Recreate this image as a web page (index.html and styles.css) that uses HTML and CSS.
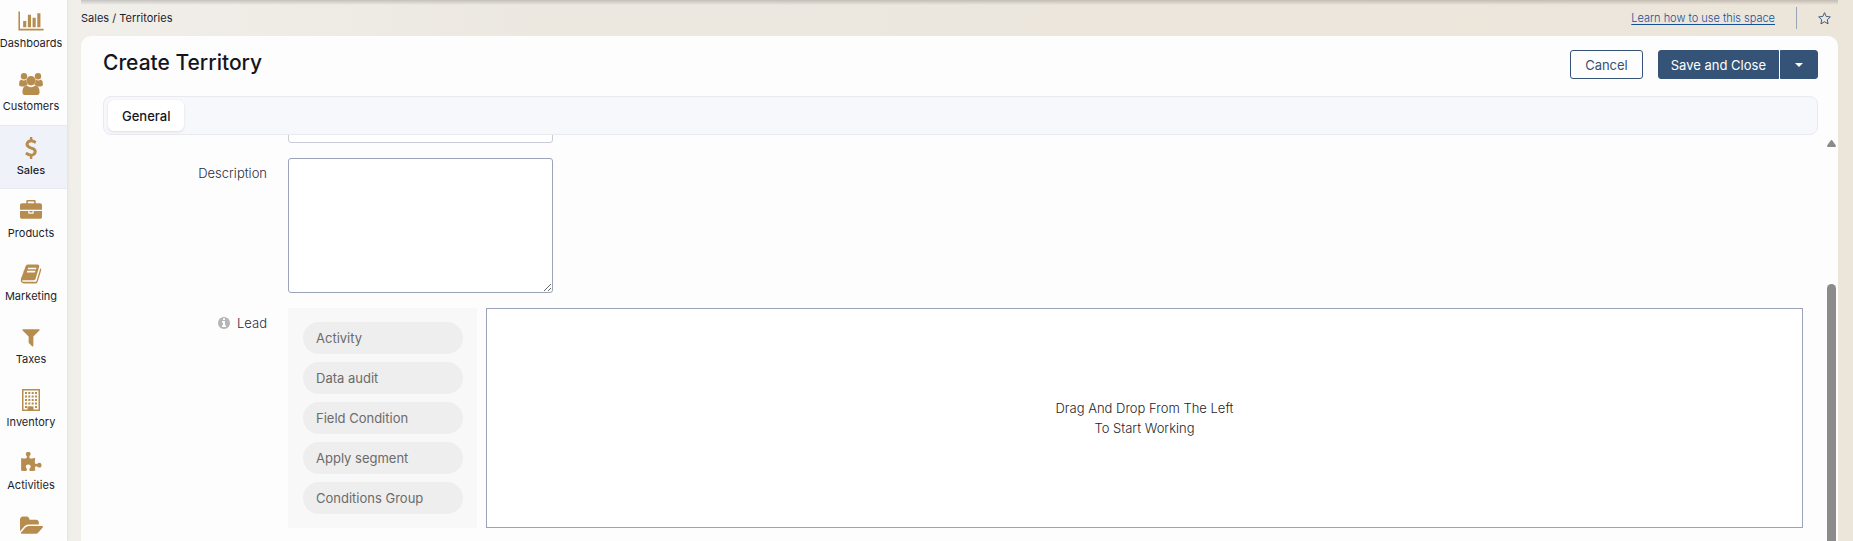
FILE: index.html
```html
<!DOCTYPE html>
<html lang="en">
<head>
<meta charset="utf-8">
<title>Create Territory</title>
<link rel="stylesheet" href="styles.css">
</head>
<body>
<div class="app">
  <nav class="sidebar" aria-label="Main">
    <a class="nav-item" href="#"><svg class="nav-icon" viewBox="0 0 2048 1792"><path d="M640 896v512h-256v-512h256zm384-512v1024h-256v-1024h256zm1024 1152v128h-2048v-1536h128v1408h1920zm-640-896v768h-256v-768h256zm384-384v1152h-256v-1152h256z"/></svg><span>Dashboards</span></a>
    <a class="nav-item" href="#"><svg class="nav-icon" viewBox="0 0 24 22"><circle cx="5" cy="3.3" r="3.2"/><circle cx="19" cy="3.3" r="3.2"/><path d="M2 6.6q3 2 5 0 .2 3.200 1.700 5.400Q6.500 12.200 5.500 13.600H2.400Q0 13.600 0 11.200 0 7.800 2 6.600zM22 6.600q-3 2-5 0-.2 3.200-1.700 5.400 2.200.2 3.200 1.600h3.100q2.400 0 2.400-2.400 0-3.400-2-4.600z"/><circle cx="12" cy="7.800" r="4.700"/><path d="M7.600 12.600q4.400 3.200 8.800 0 4.200.6 4.200 6.600 0 3-3 3H6.400q-3 0-3-3 0-6 4.200-6.600z"/></svg><span>Customers</span></a>
    <a class="nav-item active" href="#" aria-current="page"><svg class="nav-icon" viewBox="0 0 1792 1792"><path d="M1362 1185q0 153-99.500 263.500t-258.500 136.500v175q0 14-9 23t-23 9h-135q-13 0-22.500-9.500t-9.500-22.500v-175q-66-9-127.500-31t-101.500-44.500-74-48-46.500-37.500-17.500-18q-17-21-2-41l103-135q7-10 23-12 15-2 24 9l2 2q113 99 243 125 37 8 74 8 81 0 142.500-43t61.500-122q0-28-15-53t-33.500-42-58.500-37.500-66-32-80-32.500q-39-16-61.500-25t-61.500-26.500-62.500-31-56.500-35.500-53.500-42.500-43.500-49-35.500-58-21-66.500-8.500-78q0-138 98-242t255-134v-180q0-13 9.500-22.500t22.500-9.500h135q14 0 23 9t9 23v176q57 6 110.500 23t87 33.500 63.500 37.500 39 29 15 14q17 18 5 38l-81 146q-8 15-23 16-14 3-27-7-3-3-14.500-12t-39-26.500-58.500-32-74.500-26-85.500-11.500q-95 0-155 43t-60 111q0 26 8.500 48t29.500 41.500 39.500 33 56 31 60.500 27 70 27.500q53 20 81 31.500t76 35 75.500 42.500 62 50 53 63.500 31.500 76.500 13 94z"/></svg><span>Sales</span></a>
    <a class="nav-item" href="#"><svg class="nav-icon" viewBox="0 0 1792 1792"><path d="M640 256h512v-128h-512v128zm1152 640v480q0 66-47 113t-113 47h-1472q-66 0-113-47t-47-113v-480h672v160q0 26 19 45t45 19h320q26 0 45-19t19-45v-160h672zm-768 0v128h-256v-128h256zm768-480v384h-1792v-384q0-66 47-113t113-47h352v-160q0-40 28-68t68-28h576q40 0 68 28t28 68v160h352q66 0 113 47t47 113z"/></svg><span>Products</span></a>
    <a class="nav-item" href="#"><svg class="nav-icon" viewBox="0 0 1792 1792"><path d="M1703 478q40 57 18 129l-275 906q-19 64-76.500 107.500t-122.500 43.500h-923q-77 0-148.500-53.500t-99.500-131.500q-24-67-2-127 0-4 3-27t4-37q1-8-3-21.500t-3-19.500q2-11 8-21t16.500-23.500 16.500-23.500q23-38 45-91.500t30-91.500q3-10 .5-30t-.5-28q3-11 17-28t17-23q21-36 42-92t25-90q1-9-2.500-32t.5-28q4-13 22-30.500t22-22.500q19-26 42.500-84.500t27.500-96.500q1-8-3-25.500t-2-26.500q2-8 9-18t18-23 17-21q8-12 16.500-30.500t15-35 16-36 19.500-32 26.500-23.500 36-11.500 47.500 5.500l-1 3q38-9 51-9h761q74 0 114 56t18 130l-274 906q-36 119-71.500 153.500t-128.500 34.500h-869q-27 0-38 15-11 16-1 43 24 70 144 70h923q29 0 56-15.500t35-41.500l300-987q7-22 5-57 38 15 59 43zm-1064 2q-4 13 2 22.500t20 9.500h608q13 0 25.500-9.500t16.500-22.500l21-64q4-13-2-22.500t-20-9.500h-608q-13 0-25.500 9.500t-16.500 22.500zm-83 256q-4 13 2 22.500t20 9.500h608q13 0 25.500-9.500t16.500-22.500l21-64q4-13-2-22.500t-20-9.500h-608q-13 0-25.500 9.500t-16.500 22.500z"/></svg><span>Marketing</span></a>
    <a class="nav-item" href="#"><svg class="nav-icon" viewBox="0 0 1792 1792"><path d="M1595 295q17 41-14 70l-493 493v742q0 42-39 59-13 5-25 5-27 0-45-19l-256-256q-19-19-19-45v-486l-493-493q-31-29-14-70 17-39 59-39h1280q42 0 59 39z"/></svg><span>Taxes</span></a>
    <a class="nav-item" href="#"><svg class="nav-icon" viewBox="0 0 22 22"><path fill-rule="evenodd" d="M2 0h18v22H2zM3.500 1.500v19h4v-3h5v3h6v-19z"/><path d="M5 3h2v2H5zm3.300 0h2v2h-2zm3.400 0h2v2h-2zm3.300 0h2v2h-2zM5 6.500h2v2H5zm3.300 0h2v2h-2zm3.400 0h2v2h-2zm3.300 0h2v2h-2zM5 10h2v2H5zm3.300 0h2v2h-2zm3.400 0h2v2h-2zm3.300 0h2v2h-2zM5 13.500h2v2H5zm3.300 0h2v2h-2zm3.400 0h2v2h-2zm3.300 0h2v2h-2zM5 17h2v2H5zm10 0h2v2h-2zM8.500 17.500h5V21h-5z"/></svg><span>Inventory</span></a>
    <a class="nav-item" href="#"><svg class="nav-icon" viewBox="0 0 1792 1792"><path d="M1755 1083q0 81-44.500 135t-123.500 54q-41 0-77.500-17.500t-59-38-56.500-38-71-17.500q-110 0-110 124 0 39 16 115t15 115v5q-22 0-33 1-34 3-97.500 11.500t-115.500 13.500-98 5q-61 0-103-26.500t-42-83.500q0-37 17.500-71t38-56.500 38-59 17.500-77.500q0-79-54-123.500t-135-44.500q-84 0-143 45.500t-59 127.500q0 43 15 83t33.500 64.500 33.500 53 15 50.500q0 45-46 89-37 35-117 35-95 0-245-24-9-2-27.500-4t-27.500-4l-13-2q-1 0-3-1-2 0-2-1v-1024q2 1 17.500 3.500t34 5 21.500 3.500q150 24 245 24 80 0 117-35 46-44 46-89 0-22-15-50.500t-33.500-53-33.500-64.500-15-83q0-82 59-127.500t144-45.500q80 0 134 44.500t54 123.500q0 41-17.500 77.500t-38 59-38 56.500-17.500 71q0 57 42 83.500t103 26.500q64 0 180-15t163-17v2q-1 2-3.500 17.500t-5 34-3.500 21.500q-24 150-24 245 0 80 35 117 44 46 89 46 22 0 50.500-15t53-33.500 64.500-33.500 83-15q82 0 127.500 59t45.500 143z"/></svg><span>Activities</span></a>
    <a class="nav-item" href="#" aria-label="Documents"><svg class="nav-icon" viewBox="0 0 1920 1792"><path d="M1943 952q0 31-31 66l-336 396q-43 51-120.500 86.500t-143.500 35.500h-1088q-34 0-60.500-13t-26.500-43q0-31 31-66l336-396q43-51 120.500-86.500t143.500-35.500h1088q34 0 60.500 13t26.500 43zm-343-344v160h-832q-94 0-197 47.500t-164 119.500l-337 396-5 6q0-4-.5-12.500t-.5-12.500v-960q0-92 66-158t158-66h320q92 0 158 66t66 158v32h544q92 0 158 66t66 158z"/></svg></a>
  </nav>
  <div class="page">
    <header class="crumbs">
      <span>Sales / Territories</span>
      <div class="crumb-tools">
        <a class="help" href="#">Learn how to use this space</a>
        <span class="divider"></span>
        <button class="star" type="button" aria-label="Add to favorites"><svg viewBox="0 0 16 16"><path d="M8 1.800l1.800 4 4.400.5-3.200 3 .8 4.400L8 11.500l-3.800 2.200.8-4.400-3.200-3 4.400-.5z"/></svg></button>
      </div>
    </header>
    <main class="panel">
      <div class="title-row">
        <h1>Create Territory</h1>
        <div class="actions">
          <button class="btn" type="button">Cancel</button>
          <div class="split">
            <button class="btn primary" type="button">Save and Close</button>
            <button class="btn primary caret" type="button" aria-label="More save options"><svg viewBox="0 0 8 4"><path d="M0 0h8L4 4z"/></svg></button>
          </div>
        </div>
      </div>
      <div class="tabs" role="tablist"><button class="tab" type="button" role="tab" aria-selected="true">General</button></div>
      <div class="scroll-area">
        <form class="form">
          <div class="row row-cut"><span></span><input class="text-input" type="text" aria-label="Territory"></div>
          <div class="row"><label class="label" for="description">Description</label><textarea class="text-area" id="description"></textarea></div>
          <div class="row">
            <div class="label"><svg class="info" viewBox="128 128 1536 1536"><path d="M1152 1376v-160q0-14-9-23t-23-9h-96v-512q0-14-9-23t-23-9h-320q-14 0-23 9t-9 23v160q0 14 9 23t23 9h96v320h-96q-14 0-23 9t-9 23v160q0 14 9 23t23 9h448q14 0 23-9t9-23zm-128-896v-160q0-14-9-23t-23-9h-192q-14 0-23 9t-9 23v160q0 14 9 23t23 9h192q14 0 23-9t9-23zm640 416q0 209-103 385.500t-279.500 279.500-385.500 103-385.500-103-279.500-279.500-103-385.500 103-385.500 279.500-279.500 385.500-103 385.500 103 279.500 279.500 103 385.500z"/></svg>Lead</div>
            <div class="builder">
              <ul class="palette">
                <li class="chip">Activity</li>
                <li class="chip">Data audit</li>
                <li class="chip">Field Condition</li>
                <li class="chip">Apply segment</li>
                <li class="chip">Conditions Group</li>
              </ul>
              <div class="canvas"><p>Drag And Drop From The Left<br>To Start Working</p></div>
            </div>
          </div>
        </form>
        <div class="scrollbar" aria-hidden="true"><svg class="arrow" viewBox="0 0 9 7"><path d="M4.500 0Q5 0 5.600.8L8.700 5.300Q9.400 7 8 7H1Q-.4 7 .3 5.300L3.400.8Q4 0 4.500 0z"/></svg><span class="thumb"></span></div>
      </div>
    </main>
  </div>
</div>
</body>
</html>
```

FILE: styles.css
```css
* { box-sizing: border-box; }
body {
  margin: 0;
  font-family: Inter, "Open Sans", sans-serif;
  font-size: 13px;
  color: #1c1e2b;
}
button, input, textarea { font: inherit; }
.app {
  display: flex;
  height: 100vh;
  overflow: hidden;
  background: linear-gradient(90deg, #f2f0ec 0%, #ece8e0 30%, #ece5da 100%);
}

.sidebar {
  flex: none;
  width: 67px;
  margin-top: -1px;
  background: #fdfdfd;
  box-shadow: 0 0 4px #00000018;
}
.nav-item {
  display: flex;
  flex-direction: column;
  align-items: center;
  gap: 3px;
  height: 63px;
  padding: 11px 5px 0 0;
  font-size: 11px;
  line-height: 16px;
  color: #1c1e2b;
  text-decoration: none;
}
.nav-item.active {
  height: 64px;
  background: #eff3f9;
  border-top: 1px solid #e6e9ef;
  border-bottom: 1px solid #e6e9ef;
  font-weight: 500;
}
.nav-icon { flex: none; width: 26px; height: 22px; fill: #b78d4f; }

.page {
  flex: 1;
  min-width: 0;
  display: flex;
  flex-direction: column;
  padding: 0 15px 0 14px;
}
.crumbs {
  display: flex;
  justify-content: space-between;
  align-items: center;
  height: 36px;
  padding-right: 6px;
  font-size: 11px;
  background: linear-gradient(#0000002e, #00000000 5px);
}
.crumb-tools { display: flex; align-items: center; }
.help { color: #15509a; font-weight: 300; text-underline-offset: 2px; }
.divider { width: 1px; height: 22px; margin: 0 20px 0 21px; background: #9ba3b8; }
.star { display: flex; padding: 0; border: 0; background: none; }
.star svg { width: 15px; height: 15px; fill: none; stroke: #355377; }

.panel {
  flex: 1;
  min-height: 0;
  display: flex;
  flex-direction: column;
  background: #fdfdfd;
  border-radius: 10px 10px 0 0;
}
.title-row {
  display: flex;
  justify-content: space-between;
  padding: 14px 20px 0 22px;
}
h1 { margin: 0; font-size: 21px; line-height: 26px; font-weight: 500; color: #14161f; }
.actions { display: flex; gap: 15px; }
.split { display: flex; gap: 1px; }
.btn {
  height: 29px;
  padding: 0 14px;
  border: 1px solid #355377;
  border-radius: 3px;
  background: #fdfdfd;
  color: #355377;
}
.primary { padding: 0 12px; background: #355377; color: #fff; border-radius: 3px 0 0 3px; }
.caret { width: 38px; padding: 0 14px; border-radius: 0 3px 3px 0; }
.caret svg { display: block; width: 8px; height: 4px; fill: #fff; }
.tabs {
  flex: none;
  display: flex;
  height: 39px;
  margin: 17px 20px 0 22px;
  padding: 3px 4px;
  background: #f7f8fb;
  border: 1px solid #e8eaf0;
  border-radius: 8px;
}
.tab {
  padding: 0 14px;
  border: 0;
  border-radius: 6px;
  background: #fff;
  color: #14161f;
  font-weight: 500;
  box-shadow: 0 1px 3px #0000001c;
}

.scroll-area { flex: 1; min-height: 0; display: flex; overflow: hidden; }
.form { flex: 1; min-width: 0; display: flex; flex-direction: column; gap: 15px; }
.row {
  display: grid;
  grid-template-columns: 186px 1fr;
  column-gap: 21px;
}
.row-cut { margin-top: -24px; }
.label {
  display: flex;
  justify-content: flex-end;
  align-items: center;
  gap: 7px;
  height: 29px;
  font-weight: 300;
  color: #2b2e40;
}
.info { width: 12px; height: 12px; fill: #b5b5b5; }
.text-input, .text-area {
  display: block;
  width: 265px;
  border: 1px solid #9ba3b8;
  border-radius: 3px;
  background: #fff;
}
.text-input { height: 32px; border-color: #c9ccd8; }
.text-area { height: 135px; }

.builder { display: flex; gap: 9px; padding-right: 15px; }
.palette {
  flex: none;
  display: flex;
  flex-direction: column;
  gap: 8px;
  width: 189px;
  margin: 0;
  padding: 14px 14px 14px 15px;
  background: #f8f8f8;
  list-style: none;
}
.chip {
  padding: 0 13px;
  border-radius: 16px;
  line-height: 32px;
  background: #eee;
  color: #6b6b6b;
}
.canvas {
  flex: 1;
  display: flex;
  justify-content: center;
  align-items: center;
  border: 1px solid #9ba3b8;
  background: #fff;
  text-align: center;
}
.canvas p { margin: 0; font-weight: 300; line-height: 20px; }
.scrollbar {
  display: flex;
  flex-direction: column;
  gap: 137px;
  width: 20px;
  padding: 5px 2px 0 9px;
}
.arrow { flex: none; width: 9px; height: 7px; fill: #8b8b8b; }
.thumb { flex: 1; border-radius: 5px 5px 0 0; background: #8b8b8b; }
```
